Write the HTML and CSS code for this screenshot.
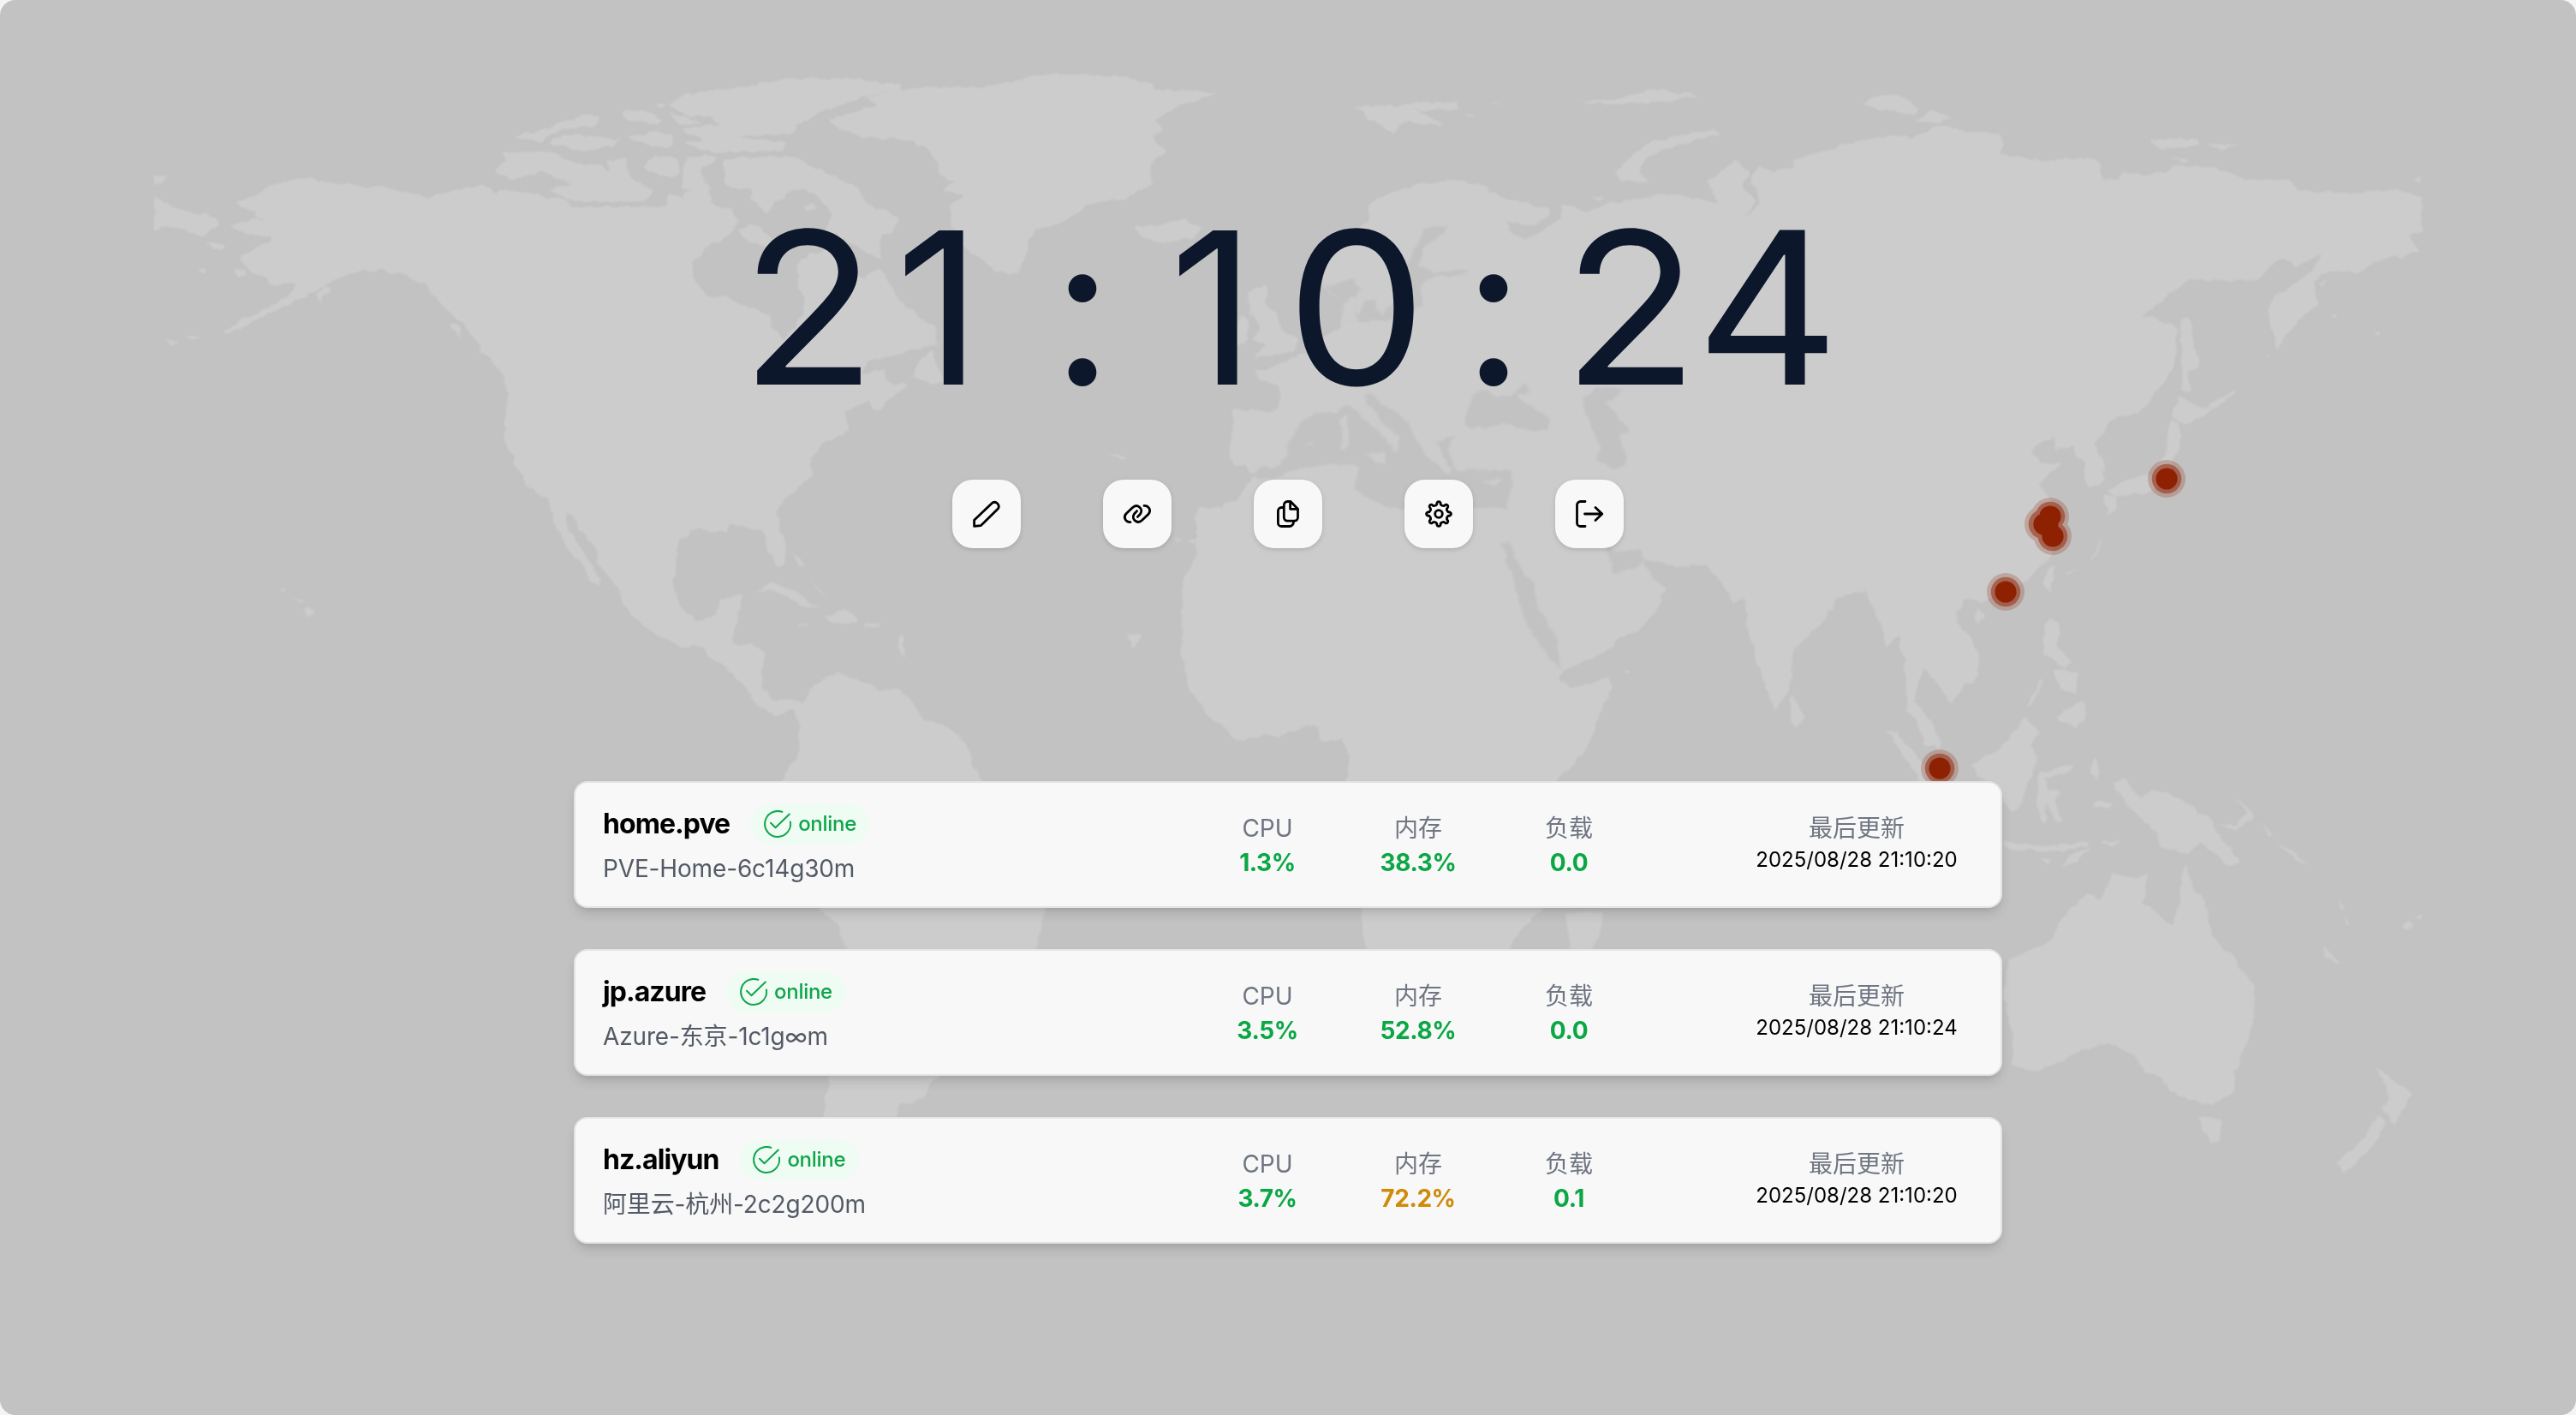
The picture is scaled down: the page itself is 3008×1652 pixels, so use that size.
FILE: index.html
```html
<!DOCTYPE html>
<html lang="zh-CN">
<head>
<meta charset="utf-8">
<title>Server Dashboard</title>
<link rel="stylesheet" href="styles.css">
</head>
<body>
<div class="page">
<svg class="map" viewBox="0 0 3008 1652" aria-hidden="true">
  <defs>
    <filter id="coast" x="0" y="0" width="100%" height="100%">
      <feTurbulence type="fractalNoise" baseFrequency="0.08" numOctaves="3" seed="4"/>
      <feDisplacementMap in="SourceGraphic" scale="8" xChannelSelector="R" yChannelSelector="G"/>
      <feGaussianBlur stdDeviation="0.8"/>
    </filter>
  </defs>
  <g class="land" filter="url(#coast)">
    <!-- Alaska, western Canada, western United States -->
    <g transform="translate(150 60) scale(.48469 .44643)">
      <path d="M62 380L145 422 195 425 222 447 180 485 120 462 78 458 70 470 60 470ZM62 322L100 330 80 343 62 345ZM188 500L230 505 232 515 205 514ZM255 572L280 570 285 585 265 585ZM450 640L480 610 490 625 460 655ZM85 755L125 758 105 768ZM135 748L185 750 150 756ZM165 565L185 568 178 580ZM775 708L795 715 805 752 778 725ZM424 1460L434 1452 447 1466 434 1480 425 1476ZM388 1422L425 1440 422 1446ZM365 1407L380 1407 375 1418Z"/>
      <path d="M258 395L300 380 345 352 420 330 490 345 620 355 720 380 760 370 850 350 885 370 895 360 960 370 1060 390 1065 407 1130 408 1200 405 1300 408 1300 370 1345 380 1355 1262 1330 1275 1318 1300 1320 1345 1311 1390 1320 1440 1355 1490 1355 1560 1325 1554 1240 1505 1195 1455 1195 1410 1180 1380 1135 1330 1130 1310 1085 1250 1075 1215 1055 1205 1055 1235 1085 1290 1105 1325 1140 1385 1130 1397 1110 1380 1090 1335 1060 1305 1045 1275 1020 1215 1010 1170 965 1140 940 1100 935 1080 915 1040 905 1010 912 900 900 835 845 785 845 765 820 735 790 695 775 690 720 615 675 585 610 573 560 575 500 595 400 655 340 685 232 740 230 730 270 705 380 645 405 610 340 608 330 590 300 580 270 545 290 520 350 495 340 482 290 480 243 457 305 435 330 440Z"/>
      <path d="M895 262L1020 265 1065 288 1140 298 1160 315 1155 285 1200 278 1210 330 1265 365 1240 390 1160 393 1080 392 1015 365 1030 352 1075 350 990 310 970 325 925 335 885 315 912 280ZM928 225L1035 192 1100 165 1135 170 1125 195 1040 205 990 235ZM1015 240L1045 215 1120 225 1190 230 1165 250 1100 262ZM1190 155L1240 155 1290 178 1280 190 1200 178ZM1205 220L1270 210 1312 220 1310 245 1280 250 1215 235ZM1240 300L1265 275 1325 275 1330 310 1310 330 1280 325ZM1300 165L1345 170 1380 190 1330 192ZM1345 275L1425 272 1380 310 1400 370 1330 360 1335 310ZM1270 142L1285 135 1300 142 1285 148ZM1330 205L1400 210 1360 220Z"/>
    </g>
    <!-- Eastern Canada, Greenland, Iceland, Atlantic coast -->
    <g transform="translate(800 60) scale(.48469 .44643)">
      <path d="M-5 370L50 360 65 380 60 400 110 415 130 440 120 465 80 500 60 505 20 550 15 590 50 635 55 643 100 640 150 670 205 685 210 720 238 760 250 735 265 720 285 680 290 640 270 620 270 570 280 545 330 520 350 510 380 540 400 580 430 595 470 570 490 600 515 650 560 690 600 720 608 765 560 780 500 795 440 810 425 850 455 835 480 825 485 865 540 872 460 940 440 915 390 940 385 965 395 990 330 1030 305 1060 305 1110 225 1190 220 1210 240 1290 240 1340 225 1345 200 1290 190 1250 170 1240 110 1235 100 1255 60 1245 -5 1262ZM565 810L595 780 610 830 628 860 600 872 545 850Z"/>
      <path d="M90 300L100 280 260 275 330 310 420 360 440 400 520 435 500 475 470 480 470 545 430 520 370 480 340 480 350 420 310 370 260 360 215 400 195 425 160 385 160 360 100 355ZM130 460L165 450 210 490 200 510 150 500ZM285 405L305 395 315 410 295 420Z"/>
      <path d="M0 110L50 105 130 95 240 72 380 72 520 85 520 100 440 115 330 160 270 190 260 215 120 222 245 240 230 262 60 262 -5 240 40 232 -5 200 90 190 60 172 0 165 -40 140ZM345 180L420 150 465 140 430 120 520 100 600 92 720 95 830 65 900 58 1060 65 1130 85 1130 100 1200 100 1285 108 1190 145 1160 155 1135 180 1150 205 1125 225 1160 265 1120 290 1125 350 1060 385 970 400 920 445 850 460 830 500 815 540 800 582 775 583 725 560 695 530 660 500 660 470 640 455 638 400 675 380 620 360 650 340 610 320 605 290 580 250 530 230 430 225 370 200ZM1085 455L1130 455 1200 437 1245 465 1225 485 1150 500 1095 485ZM1015 1048L1070 1065 1050 1068ZM1180 1265L1195 1282 1185 1285ZM1210 1278L1248 1262 1225 1290Z"/>
    </g>
    <!-- Europe, Near East, western Siberia -->
    <g transform="translate(1400 60) scale(.48469 .44643)">
      <path d="M82 938L175 938 195 930 190 875 145 860 130 835 180 825 225 800 260 790 290 750 345 720 338 680 335 640 300 620 285 590 290 540 330 510 410 440 410 400 460 370 540 345 620 335 690 350 700 370 840 410 845 430 810 455 740 445 760 480 790 490 830 465 870 440 875 400 890 400 930 420 1000 395 1120 370 1250 395 1225 340 1290 285 1325 310 1310 350 1340 395 1310 435 1352 400 1345 360 1330 330 1350 295 1380 315 1440 300 1445 280 1568 245 1568 1225 50 1225 62 1185 100 1160 132 1110 115 1085 82 1085 72 1050 80 1000ZM115 630L165 610 170 640 160 655 190 690 200 730 240 750 230 785 130 800 165 765 130 755 150 720 130 690 120 660ZM85 720L105 690 122 700 118 750 90 775 75 765Z"/>
      <path d="M1000 320L1040 275 1090 235 1240 205 1260 215 1150 245 1080 275 1060 310 1085 345 1010 335ZM375 145L500 140 590 190 530 190 500 180 470 215 415 180ZM490 140L620 130 625 150 540 158ZM900 125L1000 128 1080 100 1205 115 1120 130 980 140ZM945 380L975 375 960 388ZM640 165L665 165 650 172ZM695 137L740 137 715 141Z"/>
      <g class="sea">
        <path d="M125 1108L150 1090 185 1090 215 1050 215 1030 245 975 275 945 330 945 360 925 400 965 455 1020 470 1050 485 1035 480 1010 440 965 405 920 400 895 420 895 440 920 500 965 530 1030 560 1070 600 1110 610 1095 570 1020 620 1005 600 1040 620 1095 700 1095 755 1095 755 1120 740 1200 720 1212 660 1205 560 1190 490 1215 450 1190 390 1155 375 1145 385 1100 380 1085 320 1080 240 1090 190 1115 150 1118ZM640 960L660 900 690 880 720 905 750 900 785 870 800 885 765 900 845 960 840 990 800 995 740 975 690 985 645 980ZM925 905L960 880 1020 880 1000 910 980 920 1010 960 1040 990 1015 1000 1030 1080 1000 1092 960 1070 965 1030 930 940ZM340 700L335 640 300 615 370 595 390 620 370 660 385 690 400 655 420 650 440 690 470 650 480 600 500 560 530 500 540 465 600 455 590 475 545 510 530 560 570 580 650 570 640 582 560 590 530 620 540 660 500 690 470 700 400 708 350 705 385 705 365 660Z"/>
      </g>
      <path d="M340 720L345 655 380 640 375 700ZM342 955L358 950 362 1030 345 1045ZM400 1055L455 1050 445 1080ZM680 1125L730 1118 712 1138ZM250 1030L280 1020 265 1032Z"/>
    </g>
    <!-- Siberia, East Asia, Japan -->
    <g transform="translate(2100 60) scale(.48469 .44643)">
      <path d="M-15 282L75 270 110 240 220 220 270 225 340 190 400 210 480 215 500 240 480 270 550 278 600 290 650 278 720 283 735 335 770 335 785 315 800 325 880 320 900 300 1000 300 1080 335 1185 335 1205 365 1340 370 1440 360 1502 380 1502 470 1470 480 1492 528 1400 545 1350 580 1280 575 1240 600 1250 660 1200 710 1150 780 1130 680 1145 640 1180 620 1240 570 1260 530 1200 565 1190 543 1150 545 1110 595 1050 600 935 597 880 650 830 690 880 710 915 720 905 820 865 890 820 945 770 955 745 975 740 1000 710 1025 730 1060 738 1125 695 1140 685 1070 665 1055 665 1030 620 1045 615 1005 560 1045 585 1075 630 1080 580 1130 605 1170 640 1230 600 1330 545 1390 500 1410 440 1440 405 1430 380 1470 385 1510 425 1575 250 1575 240 1530 210 1550 200 1480 160 1410 90 1430 70 1475 -5 1560 -15 1560Z"/>
      <path d="M155 135L205 112 245 115 290 150 280 165 190 152ZM280 185L320 155 370 172 340 185ZM920 700L940 700 965 825 940 835 945 885 925 885ZM915 900L950 925 1000 935 945 975 900 960ZM895 965L915 975 922 1030 900 1070 880 1130 830 1160 770 1160 740 1150 800 1115 850 1110 885 1050ZM735 1165L770 1160 765 1205 745 1210ZM600 1350L620 1345 605 1415 590 1395ZM418 1475L432 1456 448 1475 432 1496ZM845 230L960 228 970 245 870 257ZM985 240L1060 247 1020 257ZM895 280L945 280 930 293ZM1480 340L1502 325 1502 342ZM1250 605L1270 598 1258 612ZM1125 800L1138 790 1130 805ZM1385 735L1405 732 1400 750ZM595 1490L625 1490 625 1580 590 1580ZM1280 685L1300 685 1298 698ZM730 1275L737 1275 710 1330 705 1325ZM645 1358L675 1350 655 1365ZM985 930L1050 885 1052 892 1000 935Z"/>
    </g>
    <!-- Mexico, Caribbean, South America, West Africa -->
    <g transform="translate(700 600) scale(.5102 .49745)">
      <path d="M-5 -15L410 -15 400 10 420 60 420 120 410 125 385 85 370 40 300 25 265 42 215 32 178 60 175 110 168 160 180 215 220 252 265 240 275 200 325 190 320 240 305 270 305 305 350 305 378 325 370 400 400 440 430 430 465 445 490 400 540 375 590 385 640 410 690 410 740 480 800 500 840 540 860 600 880 630 1000 720 1018 925 1000 1022 900 1200 762 1330 740 1375 685 1388 680 1415 650 1500 500 1500 512 1415 525 1319 565 1022 550 970 500 925 418 640 418 625 455 560 458 500 440 460 400 475 360 450 325 395 280 355 220 305 185 308 80 245 50 200 40 170 -5 115ZM355 185L395 160 450 185 505 220 450 210 400 175ZM515 245L560 222 595 250 545 262ZM605 255L648 256 640 264 608 264ZM450 255L485 262 460 265ZM440 90L470 120 455 125ZM480 150L525 200 500 180ZM682 285L695 285 700 340 692 335ZM1205 280L1240 282 1225 320Z"/>
      <path d="M1435 -15L1420 45 1380 70 1340 150 1335 200 1330 310 1345 400 1385 465 1460 530 1520 518 1580 510 1580 -15Z"/>
    </g>
    <!-- Africa, Arabia, India -->
    <g transform="translate(1400 600) scale(.5102 .33333)">
      <path d="M-5 -20L-5 620 15 700 90 795 150 770 180 780 265 733 285 795 330 790 345 850 335 940 370 1380 375 1470 390 1550 600 1650 710 1524 740 1450 785 1390 780 1100 820 935 890 820 945 600 940 570 900 590 850 612 825 575 835 550 940 475 960 430 1000 420 1045 340 1070 265 1020 190 1020 160 1100 185 1160 178 1200 250 1225 315 1250 295 1255 400 1285 560 1320 688 1350 620 1362 470 1400 400 1455 320 1460 290 1520 262 1545 320 1568 400 1568 -20ZM1358 630L1387 710 1368 748 1350 720ZM840 1400L925 1390 915 1480 895 1540 850 1540ZM970 552L980 545 990 552 980 560Z"/>
      <g class="sea"><path d="M690 100L710 100 740 200 765 250 770 310 820 440 828 550 780 460 745 370 720 240ZM930 100L960 130 1015 130 1020 160 1000 190 948 208Z"/></g>
    </g>
    <!-- Southeast Asia and Oceania -->
    <g transform="translate(2100 700) scale(.5102 .47194)">
      <path d="M150 -40L160 0 190 60 200 115 230 90 245 170 250 270 275 310 290 360 325 372 325 340 300 300 265 250 285 165 320 210 350 262 370 225 410 190 412 130 390 90 360 50 358 10 385 -40ZM200 320L225 330 290 410 300 460 285 460ZM400 405L455 375 520 290 550 325 535 360 545 400 510 510 490 525 440 450 415 440ZM550 430L630 405 625 425 565 440 570 470 605 475 585 490 605 550 590 555 565 500 565 555 553 550 545 490ZM568 50L598 55 590 120 625 150 610 170 570 140 558 115ZM580 170L640 180 635 230 600 225ZM590 290L650 250 658 300 635 318ZM520 265L558 195 562 205 530 262ZM470 600L560 610 665 600 665 612 560 625 475 615ZM600 665L620 635 670 615 640 645ZM675 390L690 410 680 455 670 430ZM680 498L718 505 715 517 680 510ZM548 635L575 645 570 655ZM690 600L740 590 720 610Z"/>
      <path d="M720 450L750 447 780 490 810 470 870 490 940 540 960 575 1010 650 985 658 920 600 890 630 830 615 820 575 750 510ZM950 555L1000 560 1035 520 1042 540 1000 572ZM985 480L1035 520 1030 528ZM1058 545L1085 580 1080 590ZM1088 595L1140 630 1178 665 1130 635ZM480 890L580 845 600 790 660 725 690 745 720 675 770 690 800 680 790 750 855 805 870 760 875 690 885 655 900 710 930 745 945 830 1000 890 1045 960 1045 1040 1000 1170 995 1220 940 1253 850 1215 825 1180 800 1175 780 1155 770 1125 710 1097 640 1120 600 1145 540 1168 487 1150 495 1100 470 980ZM912 1280L970 1285 965 1335 945 1348ZM1320 1150L1365 1195 1405 1220 1365 1300 1335 1255 1355 1235ZM1325 1280L1345 1290 1320 1345 1250 1420 1232 1390 1290 1340ZM1198 855L1242 900 1235 905 1205 880ZM1385 805L1400 795 1412 812 1390 818ZM1405 785L1432 778 1420 792ZM1232 740L1250 765 1240 768ZM1250 780L1262 805 1255 808Z"/>
    </g>
  </g>
  <g class="pins">
    <g class="pin-halo"><circle cx="2530" cy="559" r="22"/><circle cx="2394" cy="603" r="22"/><circle cx="2386" cy="612" r="22"/><circle cx="2397" cy="626" r="22"/><circle cx="2342" cy="691" r="22"/><circle cx="2265" cy="897" r="22"/></g>
    <g class="pin-ring"><circle cx="2530" cy="559" r="17.3"/><circle cx="2394" cy="603" r="17.3"/><circle cx="2386" cy="612" r="17.3"/><circle cx="2397" cy="626" r="17.3"/><circle cx="2342" cy="691" r="17.3"/><circle cx="2265" cy="897" r="17.3"/></g>
    <g class="pin-core"><circle cx="2530" cy="559" r="12.6"/><circle cx="2394" cy="603" r="12.6"/><circle cx="2387" cy="612" r="12.6"/><circle cx="2391" cy="614" r="12.6"/><circle cx="2397" cy="626" r="12.6"/><circle cx="2342" cy="691" r="12.6"/><circle cx="2265" cy="897" r="12.6"/></g>
  </g>
</svg>

<main class="content">
  <div class="clock"><span>2</span><span class="one">1</span><span class="colon">:</span><span class="one">1</span><span>0</span><span class="colon">:</span><span>2</span><span>4</span></div>

  <nav class="toolbar">
    <button class="tool" aria-label="编辑"><svg viewBox="0 0 32 32"><path d="M1.6 30.4V23.2L22.6 3.2a4.9 4.9 0 0 1 6.7 6.9L9.4 29.6Z"/></svg></button>
    <button class="tool" aria-label="链接"><svg viewBox="0 0 32 32"><path d="M8 25.6C2 25.6-.6 19.6 3 15.8L10.3 8.7C16 3.4 23.6 9.8 19.6 16L16.4 19.4"/><path d="M24 6.4C30 6.4 32.6 12.4 29 16.2L21.7 23.3C16 28.6 8.4 22.2 12.4 16L15.6 12.6"/></svg></button>
    <button class="tool" aria-label="复制"><svg viewBox="0 0 32 32"><path d="M19 1.5h-3.7a4 4 0 0 0-4 4v14.6a4 4 0 0 0 4 4h8.2a4 4 0 0 0 4-4V10.3ZM18.6 1.5v8.8h8.9M10.8 8.5H8.4a4 4 0 0 0-4 4v14a4 4 0 0 0 4 4H17.5a5 5 0 0 0 5-5.2"/></svg></button>
    <button class="tool" aria-label="设置"><svg viewBox="-16 -16 32 32"><path d="M-2.06-13.04A2.2 2.2 0 0 1 2.06-13.04A3.2 3.2 0 0 0 7.76-10.68A2.2 2.2 0 0 1 10.68-7.76A3.2 3.2 0 0 0 13.04-2.06A2.2 2.2 0 0 1 13.04 2.06A3.2 3.2 0 0 0 10.68 7.76A2.2 2.2 0 0 1 7.76 10.68A3.2 3.2 0 0 0 2.06 13.04A2.2 2.2 0 0 1-2.06 13.04A3.2 3.2 0 0 0-7.76 10.68A2.2 2.2 0 0 1-10.68 7.76A3.2 3.2 0 0 0-13.04 2.06A2.2 2.2 0 0 1-13.04-2.06A3.2 3.2 0 0 0-10.68-7.76A2.2 2.2 0 0 1-7.76-10.68A3.2 3.2 0 0 0-2.06-13.04Z"/><circle r="4.3"/></svg></button>
    <button class="tool" aria-label="退出"><svg viewBox="0 0 32 32"><path d="M11 1.5H5.5a4 4 0 0 0-4 4v21a4 4 0 0 0 4 4H11M10.5 16H30.5M23 8.5L30.8 16 23 23.5"/></svg></button>
  </nav>

  <section class="servers">
    <article class="card">
      <div class="identity">
        <div class="heading"><h2 class="name">home.pve</h2><span class="status"><svg viewBox="0 0 32 32"><path d="M21.3 1.9A15 15 0 1 0 30.9 13.5M8 14.8L13.5 20.3 29.8 4.5"/></svg>online</span></div>
        <p class="desc">PVE-Home-6c14g30m</p>
      </div>
      <div class="stats">
        <div class="stat"><span class="label">CPU</span><span class="value">1.3%</span></div>
        <div class="stat"><span class="label">内存</span><span class="value">38.3%</span></div>
        <div class="stat"><span class="label">负载</span><span class="value">0.0</span></div>
      </div>
      <div class="updated"><span class="label">最后更新</span><time>2025/08/28 21:10:20</time></div>
    </article>
    <article class="card">
      <div class="identity">
        <div class="heading"><h2 class="name">jp.azure</h2><span class="status"><svg viewBox="0 0 32 32"><path d="M21.3 1.9A15 15 0 1 0 30.9 13.5M8 14.8L13.5 20.3 29.8 4.5"/></svg>online</span></div>
        <p class="desc">Azure-东京-1c1g∞m</p>
      </div>
      <div class="stats">
        <div class="stat"><span class="label">CPU</span><span class="value">3.5%</span></div>
        <div class="stat"><span class="label">内存</span><span class="value">52.8%</span></div>
        <div class="stat"><span class="label">负载</span><span class="value">0.0</span></div>
      </div>
      <div class="updated"><span class="label">最后更新</span><time>2025/08/28 21:10:24</time></div>
    </article>
    <article class="card">
      <div class="identity">
        <div class="heading"><h2 class="name">hz.aliyun</h2><span class="status"><svg viewBox="0 0 32 32"><path d="M21.3 1.9A15 15 0 1 0 30.9 13.5M8 14.8L13.5 20.3 29.8 4.5"/></svg>online</span></div>
        <p class="desc">阿里云-杭州-2c2g200m</p>
      </div>
      <div class="stats">
        <div class="stat"><span class="label">CPU</span><span class="value">3.7%</span></div>
        <div class="stat"><span class="label">内存</span><span class="value warn">72.2%</span></div>
        <div class="stat"><span class="label">负载</span><span class="value">0.1</span></div>
      </div>
      <div class="updated"><span class="label">最后更新</span><time>2025/08/28 21:10:20</time></div>
    </article>
  </section>
</main>
</div>
</body>
</html>
```
FILE: styles.css
```css
* { box-sizing: border-box; }

body {
  margin: 0;
  background: #f4f4f4;
  font-family: Inter, "Noto Sans CJK SC", sans-serif;
  color: #000;
}

.page {
  position: relative;
  width: 3008px;
  height: 1652px;
  overflow: hidden;
  border-radius: 18px;
  background: #c2c2c2;
}

.map {
  position: absolute;
  inset: 0;
  width: 3008px;
  height: 1652px;
}

.land { fill: #ccc; color-interpolation-filters: sRGB; }
.sea { fill: #c2c2c2; }
.pins { fill: #8f2103; }
.pin-halo { opacity: .22; }
.pin-ring { opacity: .5; }

.content {
  position: relative;
  display: flex;
  flex-direction: column;
  align-items: center;
  padding-top: 231px;
}

.clock {
  display: grid;
  grid-template-columns: repeat(8, 160px);
  height: 256px;
  font-size: 248px;
  line-height: 256px;
  text-align: center;
  color: #0d172b;
}

.clock span { transform: scaleX(1.05); }
.clock .one { transform: translateX(-8px); }
.clock .colon { transform: none; }

.toolbar {
  display: flex;
  gap: 96px;
  margin-top: 73px;
}

.tool {
  display: grid;
  place-items: center;
  width: 80px;
  height: 80px;
  padding: 0;
  border: 0;
  border-radius: 24px;
  background: #f8f8f8;
  box-shadow: 0 2px 6px rgba(0, 0, 0, .1), 0 2px 4px rgba(0, 0, 0, .06);
}

.tool svg {
  width: 32px;
  height: 32px;
  overflow: visible;
  fill: none;
  stroke: #000;
  stroke-width: 2.8;
  stroke-linecap: round;
  stroke-linejoin: round;
}

.servers {
  display: flex;
  flex-direction: column;
  gap: 48px;
  width: 1668px;
  margin-top: 272px;
}

.card {
  display: flex;
  height: 148px;
  padding: 24px 32px;
  border: 2px solid #e4e4e4;
  border-radius: 16px;
  background: #f8f8f8;
  box-shadow: 0 8px 14px -2px rgba(0, 0, 0, .13), 0 4px 8px -4px rgba(0, 0, 0, .1);
}

.identity { flex: 1; }

.heading {
  display: flex;
  align-items: center;
  height: 48px;
  gap: 24px;
}

.name {
  margin: 0;
  font-size: 32px;
  font-weight: 700;
  letter-spacing: -.95px;
  line-height: 50px;
}

.status {
  display: flex;
  align-items: center;
  gap: 8px;
  height: 48px;
  padding: 0 16px;
  border-radius: 24px;
  background: #effcf4;
  font-size: 24px;
  font-weight: 500;
  letter-spacing: -.3px;
  line-height: 50px;
  color: #0fa549;
}

.status svg {
  width: 32px;
  height: 32px;
  fill: none;
  stroke: currentColor;
  stroke-width: 2;
  stroke-linecap: round;
  stroke-linejoin: round;
}

.desc {
  margin: 8px 0 0;
  font-size: 28px;
  letter-spacing: -.15px;
  line-height: 40px;
  color: #535a66;
}

.stats {
  display: grid;
  grid-template-columns: repeat(3, 176px);
  margin-right: 112px;
}

.stat,
.updated {
  display: flex;
  flex-direction: column;
  align-items: center;
  padding-top: 9px;
}

.label {
  font-size: 28px;
  line-height: 40px;
  color: #6f7582;
}

.value {
  font-size: 28px;
  font-weight: 700;
  letter-spacing: -.4px;
  line-height: 40px;
  color: #0aa744;
}

.warn { color: #cf8a08; }

.updated { width: 272px; }

.updated time {
  font-size: 24px;
  line-height: 33px;
  white-space: nowrap;
}
```
